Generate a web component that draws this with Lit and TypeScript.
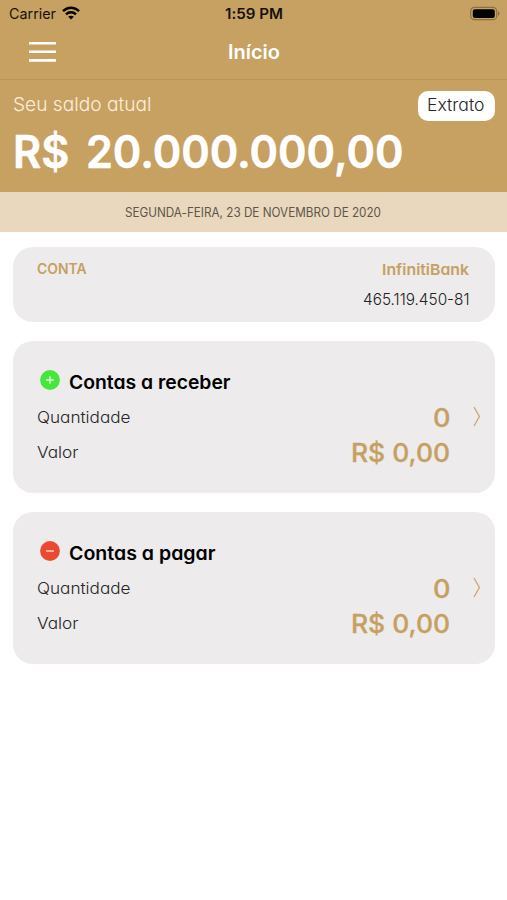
import { LitElement, html, css, svg } from "lit";
import { customElement, property } from "lit/decorators.js";

/** One line of text set to an exact measure, so that columns keep their width. */
@customElement("fit-line")
class FitLine extends LitElement {
  @property() text = "";
  @property({ type: Number }) measure = 100;
  @property({ type: Number }) size = 16;

  static styles = css`
    :host { display: block; flex: none; }
    svg { display: block; overflow: visible; }
    text { fill: currentColor; stroke: currentColor; stroke-width: var(--round, 0); stroke-linejoin: round; }
  `;

  render() {
    const h = this.size;
    return html`<svg width=${this.measure} height=${h}>
      ${svg`<text x="0" y=${h * 0.86} font-size=${h} textLength=${this.measure} lengthAdjust="spacingAndGlyphs">${this.text}</text>`}
    </svg>`;
  }
}

@customElement("bill-card")
class BillCard extends LitElement {
  @property() heading = "";
  @property({ type: Number }) measure = 160;
  @property({ type: Boolean }) income = false;

  static styles = css`
    :host { display: block; height: 152px; box-sizing: border-box; border-radius: 20px; background: #edebec; padding: 30px 12.5px 0 24px; color: #262626; }
    .head { display: flex; align-items: flex-start; height: 36px; color: #000; font-weight: 600; }
    .icon { display: block; width: 20px; height: 20px; margin: -0.2px 9.5px 0 2.5px; }
    .head fit-line { margin-top: 2px; }
    .row { display: flex; justify-content: space-between; height: 35px; }
    .row .label { margin-top: 2px; font-weight: 350; }
    .value { display: flex; align-items: flex-start; color: #c6a062; font-weight: 550; --round: 0.3px; }
    .value fit-line { margin-top: -1.6px; }
    .chevron { width: 9px; height: 21px; margin: -0.8px 0 0 23px; }
    .gap { width: 32px; }
  `;

  render() {
    return html`
      <div class="head">
        <svg class="icon" viewBox="0 0 20 20">
          <circle cx="10" cy="10" r="9.9" fill=${this.income ? "#48e53c" : "#eb4a31"} />
          <path d=${this.income ? "M6.2 10H13.8M10 6.2V13.8" : "M6.1 10H13.9"} fill="none" stroke="#fff" stroke-opacity=".82" stroke-width="1.4" />
        </svg>
        <fit-line .text=${this.heading} .measure=${this.measure} .size=${19}></fit-line>
      </div>
      <div class="row">
        <fit-line class="label" text="Quantidade" .measure=${93.5} .size=${16.4}></fit-line>
        <div class="value">
          <fit-line text="0" .measure=${17.5} .size=${25.4}></fit-line>
          <svg class="chevron" viewBox="0 0 9 21"><path d="M1 1L6.4 10.5L1 20" fill="none" stroke="#cda66c" stroke-width="1.3" /></svg>
        </div>
      </div>
      <div class="row">
        <fit-line class="label" text="Valor" .measure=${41.5} .size=${16.4}></fit-line>
        <div class="value"><fit-line text="R$ 0,00" .measure=${99} .size=${25.4}></fit-line><span class="gap"></span></div>
      </div>`;
  }
}

@customElement("app-root")
class AppRoot extends LitElement {
  static styles = css`
    :host { display: block; width: 507px; height: 900px; background: #fff; overflow: hidden; font-family: Inter, "Open Sans", sans-serif; font-feature-settings: "cv11"; font-variant-ligatures: none; font-weight: 400; }
    .top { background: #c7a162; color: #fff; height: 192px; }
    .status, .nav { font-feature-settings: normal; display: grid; grid-template-columns: 1fr auto 1fr; }
    .status { height: 27px; color: #17130c; padding: 6.5px 7px 0 9px; box-sizing: border-box; }
    .carrier { display: flex; gap: 6px; }
    .wifi { width: 18px; height: 14px; margin-top: -0.5px; }
    .clock { font-weight: 600; color: #15110a; margin-left: -1px; }
    .battery { width: 31px; height: 15px; justify-self: end; margin-top: -1px; }
    .nav { height: 53px; box-sizing: border-box; border-bottom: 1px solid #b99558; padding: 14px 28px 0 29px; }
    .menu { width: 27px; height: 22px; }
    .title { font-weight: 600; margin-top: 1px; }
    .balance { display: flex; justify-content: space-between; padding: 11px 12px 0 13px; height: 48px; box-sizing: border-box; }
    .caption { color: #fbeedc; margin-top: 3.8px; font-weight: 350; }
    .pill { background: #fff; border-radius: 10px; width: 77px; height: 30px; box-sizing: border-box; padding: 5.5px 0 0 9px; color: #262626; font-weight: 350; }
    .amount { padding: 0.5px 0 0 13px; font-weight: 600; word-spacing: 6px; --round: 0.6px; }
    .date { height: 40px; box-sizing: border-box; background: #e9d8be; color: #5e564a; display: flex; justify-content: center; padding: 14px 1px 0 0; }
    .cards { display: flex; flex-direction: column; gap: 19px; padding: 15px 12.5px 0 13px; }
    .account { height: 74.5px; box-sizing: border-box; background: #edebec; border-radius: 20px; display: flex; justify-content: space-between; padding: 14px 25.5px 0 24px; color: #c6a062; font-weight: 600; }
    .bank { display: flex; flex-direction: column; align-items: flex-end; }
    .account .name { margin-top: 1.2px; }
    .number { color: #222; font-weight: 350; margin-top: 13.8px; }
    .account .tag { margin-top: 0.7px; }
  `;

  render() {
    return html`
      <div class="top">
        <div class="status">
          <div class="carrier">
            <fit-line text="Carrier" .measure=${47} .size=${14.5}></fit-line>
            <svg class="wifi" viewBox="0 0 18 14" fill="none" stroke="#000" stroke-width="2.4">
              <path d="M1 5.2C5.5 .6 12.5 .6 17 5.2M4 8.4C6.8 5.6 11.2 5.6 14 8.4" />
              <path d="M9 13.6L6.2 10.8C7.8 9.3 10.2 9.3 11.8 10.8Z" fill="#000" stroke="none" />
            </svg>
          </div>
          <fit-line class="clock" text="1:59 PM" .measure=${58} .size=${14.5}></fit-line>
          <svg class="battery" viewBox="0 0 31 15">
            <rect x="1.7" y="1.3" width="26" height="12.4" rx="3.8" fill="none" stroke="#8b7145" stroke-width="1.2" />
            <rect x="3.8" y="3.2" width="22" height="8.8" rx="2" fill="#000" />
            <path d="M29 5.2C31 6 31 9 29 9.8Z" fill="#8b7145" />
          </svg>
        </div>
        <div class="nav">
          <svg class="menu" viewBox="0 0 27 22"><path d="M0 2.2H27M0 10.8H27M0 19.4H27" stroke="#fff" stroke-width="2.6" /></svg>
          <fit-line class="title" text="Início" .measure=${52} .size=${20}></fit-line>
        </div>
        <div class="balance">
          <fit-line class="caption" text="Seu saldo atual" .measure=${138.5} .size=${18.8}></fit-line>
          <div class="pill"><fit-line text="Extrato" .measure=${57.5} .size=${16.6}></fit-line></div>
        </div>
        <fit-line class="amount" text="R$ 20.000.000,00" .measure=${390.5} .size=${45}></fit-line>
      </div>
      <div class="date"><fit-line text="SEGUNDA-FEIRA, 23 DE NOVEMBRO DE 2020" .measure=${256} .size=${12.4}></fit-line></div>
      <div class="cards">
        <div class="account">
          <fit-line class="tag" text="CONTA" .measure=${49.5} .size=${14}></fit-line>
          <div class="bank">
            <fit-line class="name" text="InfinitiBank" .measure=${87} .size=${15.2}></fit-line>
            <fit-line class="number" text="465.119.450-81" .measure=${106.5} .size=${16.4}></fit-line>
          </div>
        </div>
        <bill-card heading="Contas a receber" .measure=${161.5} income></bill-card>
        <bill-card heading="Contas a pagar" .measure=${146.5}></bill-card>
      </div>`;
  }
}
